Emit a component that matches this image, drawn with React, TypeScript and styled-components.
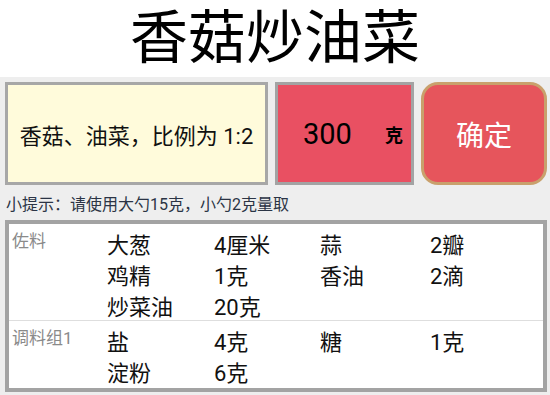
import React from "react"
import styled, { createGlobalStyle } from "styled-components"

const GlobalStyle = createGlobalStyle`
  html, body {
    margin: 0;
    padding: 0;
    background: #eeeeee;
    font-family: Roboto, "Noto Sans CJK SC", "Noto Sans", sans-serif;
  }
`

const Page = styled.div`
  width: 550px;
  height: 395px;
  display: flex;
  flex-direction: column;
  overflow: hidden;
`

const TitleBar = styled.div`
  height: 77px;
  background: #ffffff;
  display: flex;
  align-items: center;
  justify-content: center;
`

const Title = styled.h1`
  margin: 0;
  font-size: 58px;
  font-weight: 400;
  color: #000000;
  line-height: 77px;
  height: 77px;
  padding-top: 0;
`

const Body = styled.div`
  padding: 5px 3px 0 5px;
  display: flex;
  flex-direction: column;
`

const TopRow = styled.div`
  display: flex;
  gap: 7px;
  height: 103px;
`

const RatioBox = styled.div`
  width: 263px;
  box-sizing: border-box;
  border: 3px solid #a7a7a7;
  background: #fffbdb;
  display: flex;
  align-items: center;
  justify-content: center;
  font-size: 22px;
  color: #111111;
  white-space: nowrap;
`

const WeightBox = styled.div`
  width: 139px;
  box-sizing: border-box;
  border: 3px solid #a3a3a3;
  background: #e95062;
  display: flex;
  align-items: center;
  padding-left: 25px;
`

const WeightValue = styled.span`
  font-size: 29px;
  color: #000000;
  width: 82px;
`

const WeightUnit = styled.span`
  font-size: 18px;
  font-weight: 700;
  color: #000000;
`

const ConfirmButton = styled.button`
  width: 126px;
  box-sizing: border-box;
  border: 3px solid #c9a06c;
  border-radius: 17px;
  background: #e6555c;
  color: #ffffff;
  font-family: inherit;
  font-size: 28px;
  padding: 0;
  cursor: pointer;
`

const Hint = styled.div`
  height: 35px;
  display: flex;
  align-items: center;
  padding-left: 1px;
  font-size: 16px;
  color: #2b3445;
`

const Table = styled.div`
  height: 172px;
  box-sizing: border-box;
  border: 4px solid #a3a3a3;
  background: #ffffff;
`

const Group = styled.div<{ $divider?: boolean }>`
  display: grid;
  grid-template-columns: 98px 107px 106px 110px 1fr;
  grid-auto-rows: 31px;
  padding-top: 3px;
  border-bottom: ${(p) => (p.$divider ? "1px solid #dedede" : "none")};
`

const GroupLabel = styled.div<{ $rows: number }>`
  grid-row: span ${(p) => p.$rows};
  padding: 0 0 0 3px;
  font-size: 17px;
  color: #8a8a8a;
`

const Cell = styled.div`
  display: flex;
  align-items: center;
  font-size: 22px;
  color: #111111;
`

type Item = [string, string]

const groups: { label: string; items: Item[] }[] = [
  {
    label: "佐料",
    items: [
      ["大葱", "4厘米"],
      ["蒜", "2瓣"],
      ["鸡精", "1克"],
      ["香油", "2滴"],
      ["炒菜油", "20克"],
    ],
  },
  {
    label: "调料组1",
    items: [
      ["盐", "4克"],
      ["糖", "1克"],
      ["淀粉", "6克"],
    ],
  },
]

function App() {
  return (
    <Page>
      <GlobalStyle />
      <TitleBar>
        <Title>香菇炒油菜</Title>
      </TitleBar>
      <Body>
        <TopRow>
          <RatioBox>香菇、油菜，比例为 1:2</RatioBox>
          <WeightBox>
            <WeightValue>300</WeightValue>
            <WeightUnit>克</WeightUnit>
          </WeightBox>
          <ConfirmButton>确定</ConfirmButton>
        </TopRow>
        <Hint>小提示：请使用大勺15克，小勺2克量取</Hint>
        <Table>
          {groups.map((g, gi) => {
            const rows = Math.ceil(g.items.length / 2)
            return (
              <Group key={g.label} $divider={gi < groups.length - 1}>
                <GroupLabel $rows={rows}>{g.label}</GroupLabel>
                {g.items.map(([name, amount], i) => (
                  <React.Fragment key={name}>
                    <Cell style={{ gridColumn: i % 2 === 0 ? 2 : 4 }}>{name}</Cell>
                    <Cell>{amount}</Cell>
                  </React.Fragment>
                ))}
              </Group>
            )
          })}
        </Table>
      </Body>
    </Page>
  )
}

export default App
